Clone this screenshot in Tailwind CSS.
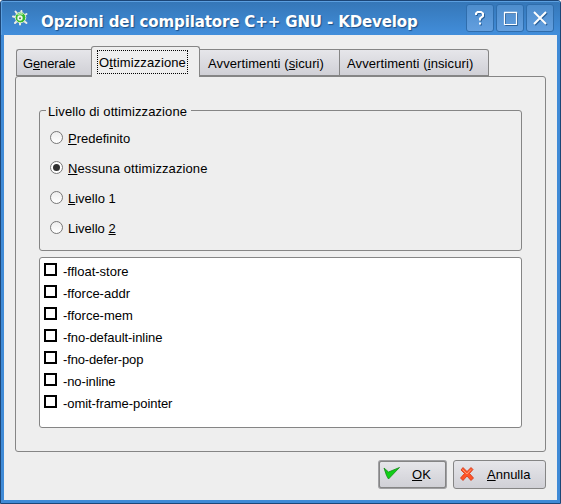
<!DOCTYPE html>
<html lang="it">
<head>
<meta charset="utf-8">
<title>Opzioni del compilatore C++ GNU - KDevelop</title>
<script src="https://cdn.jsdelivr.net/npm/@tailwindcss/browser@4"></script>
</head>
<body class="w-[561px] h-[504px] overflow-hidden bg-white">
<div class="w-[561px] h-[504px] flex flex-col rounded-t-[3px] border border-[#1c4677] bg-[#3f8ad6] font-['Liberation_Sans',Arial,sans-serif] text-[13px] leading-[16px] text-black">
  <header class="h-[34px] shrink-0 flex items-start rounded-t-[2px] border-t border-l border-[#5b9fe0] bg-linear-to-b from-[#3577b8] to-[#428edb] pl-[9px] pr-[6px]">
    <svg class="mt-[7px] w-[18px] h-[18px] shrink-0" viewBox="0 0 18 18">
      <g stroke="#f0eee4" stroke-width="2" stroke-linecap="round">
        <path d="M9 9 4.500 2.500M9 9 10.500 2M9 9 15.500 5M9 9 15.500 14M9 9 9 15.500M9 9 4 14M9 9 2 7.500"/>
      </g>
      <circle cx="9.500" cy="8.500" r="5.300" fill="#35bb2c" stroke="#dcecd6" stroke-width="1"/>
      <path d="M6.500 6Q9 3.500 12 5.500" stroke="#a7e59c" stroke-width="1.500" fill="none"/>
      <circle cx="9" cy="9" r="2.700" fill="#f0f7ec"/>
      <circle cx="9" cy="9.300" r="1" fill="#557f4e"/>
    </svg>
    <h1 class="ml-[12px] mt-[10px] grow whitespace-nowrap font-['DejaVu_Sans',sans-serif] font-bold text-[15px] leading-[20px] tracking-[-0.12px] text-white [text-shadow:1px_1px_1px_#1d4f86]">Opzioni del compilatore C++ GNU - KDevelop</h1>
    <div class="mt-[2px] flex gap-[2px]">
      <button class="size-[28px] rounded-[3px] border border-[#2f6dac] bg-linear-to-b from-[#4d8dcd] to-[#639fdf]"><svg width="26" height="26" viewBox="0 0 26 26" fill="none" stroke-width="2"><path d="M10 11V9L11 8H15L17 9.500V12L14 14.500V16.500M14 18.500v2" stroke="#2b629c"/><path d="M9 10V8.500L10.500 7H14L16 8.500V11L13 13.500V15.500M13 17.500v2" stroke="#fff"/></svg></button>
      <button class="size-[28px] rounded-[3px] border border-[#2f6dac] bg-linear-to-b from-[#4d8dcd] to-[#639fdf]"><svg width="26" height="26" viewBox="0 0 26 26" fill="none"><path d="M8 8.500H20.500V20.500H8.500V8" stroke="#2b629c"/><path d="M7.500 7.500H19.500V19.500H7.500V7" stroke="#fff" stroke-width="1.200"/><path d="M7 7.500H20" stroke="#fff" stroke-width="1.500"/></svg></button>
      <button class="size-[28px] rounded-[3px] border border-[#2f6dac] bg-linear-to-b from-[#4d8dcd] to-[#639fdf]"><svg width="26" height="26" viewBox="0 0 26 26" fill="none" stroke-width="2"><path d="M8 8 20 20M20 8 8 20" stroke="#2b629c"/><path d="M7 7 19 19M19 7 7 19" stroke="#fff"/></svg></button>
    </div>
  </header>
  <main class="grow mx-[3px] mb-[3px] flex flex-col bg-[#eeeeee] pt-[11px] pl-[11px] pr-[11px]">
    <nav class="relative z-10 -mb-px flex h-[31px] items-end whitespace-nowrap">
      <div class="mb-px ml-px h-[27px] w-[75px] rounded-tl-[3px] border border-r-0 border-[#858585] bg-linear-to-b from-[#e6e6ea] to-[#d0d0d6] pl-[6px] pt-[6px] tracking-[-0.15px]">G<u>e</u>nerale</div>
      <div class="h-[31px] w-[109px] rounded-t-[3px] border border-b-0 border-[#858585] bg-[#eeeeee] pl-[5px] pt-[3px]"><div class="h-[24px] w-[91px] border border-dotted border-black pl-px pt-[4px] tracking-[0.12px]">O<u>t</u>timizzazione</div></div>
      <div class="mb-px h-[27px] w-[140px] border border-l-0 border-[#858585] bg-linear-to-b from-[#e6e6ea] to-[#d0d0d6] pl-[8px] pt-[6px] tracking-[0.1px]">Avvertimenti (<u>s</u>icuri)</div>
      <div class="mb-px h-[27px] w-[149px] rounded-tr-[3px] border border-l-0 border-[#858585] bg-linear-to-b from-[#e6e6ea] to-[#d0d0d6] pl-[7px] pt-[6px] tracking-[0.1px]">Avvertimenti (<u>i</u>nsicuri)</div>
    </nav>
    <section class="h-[376px] w-[531px] shrink-0 rounded-[3px] border border-[#858585] px-[23px] pt-[33px]">
      <div class="h-[141px] rounded-[3px] border border-[#858585] pl-[10px]">
        <div class="-ml-[4px] -mt-[7px] w-[145px] whitespace-nowrap bg-[#eeeeee] pl-[2px] tracking-[0.1px]">Livello di ottimizzazione</div>
        <div class="mt-[4px] flex h-[30px] items-center gap-[5px]"><i class="mb-[3px] size-[13px] rounded-full border border-[#777] bg-linear-to-b from-[#eee] to-white"></i><span><u>P</u>redefinito</span></div>
        <div class="flex h-[30px] items-center gap-[5px]"><i class="mb-[3px] flex size-[13px] items-center justify-center rounded-full border border-[#777] bg-white"><b class="size-[7px] rounded-full bg-[#303030]"></b></i><span class="tracking-[0.1px]"><u>N</u>essuna ottimizzazione</span></div>
        <div class="flex h-[30px] items-center gap-[5px]"><i class="mb-[3px] size-[13px] rounded-full border border-[#777] bg-linear-to-b from-[#eee] to-white"></i><span><u>L</u>ivello 1</span></div>
        <div class="flex h-[30px] items-center gap-[5px]"><i class="mb-[3px] size-[13px] rounded-full border border-[#777] bg-linear-to-b from-[#eee] to-white"></i><span>Livello <u>2</u></span></div>
      </div>
      <div class="mt-[6px] h-[171px] rounded-[3px] border border-[#858585] bg-white pl-[4px] pt-[3px]">
        <div class="flex h-[22px] items-center gap-[6px]"><i class="mb-[5px] size-[13px] border-2 border-black"></i><span>-ffloat-store</span></div>
        <div class="flex h-[22px] items-center gap-[6px]"><i class="mb-[5px] size-[13px] border-2 border-black"></i><span>-fforce-addr</span></div>
        <div class="flex h-[22px] items-center gap-[6px]"><i class="mb-[5px] size-[13px] border-2 border-black"></i><span>-fforce-mem</span></div>
        <div class="flex h-[22px] items-center gap-[6px]"><i class="mb-[5px] size-[13px] border-2 border-black"></i><span class="tracking-[-0.06px]">-fno-default-inline</span></div>
        <div class="flex h-[22px] items-center gap-[6px]"><i class="mb-[5px] size-[13px] border-2 border-black"></i><span class="tracking-[-0.15px]">-fno-defer-pop</span></div>
        <div class="flex h-[22px] items-center gap-[6px]"><i class="mb-[5px] size-[13px] border-2 border-black"></i><span class="tracking-[-0.1px]">-no-inline</span></div>
        <div class="flex h-[22px] items-center gap-[6px]"><i class="mb-[5px] size-[13px] border-2 border-black"></i><span class="tracking-[-0.06px]">-omit-frame-pointer</span></div>
      </div>
    </section>
    <footer class="mt-[8px] flex justify-end gap-[6px]">
      <button class="flex h-[29px] w-[69px] items-start rounded-[3px] border-2 border-[#a0a0a3] bg-linear-to-b from-[#e6e6ea] to-[#d0d0d6] pl-[3px] outline -outline-offset-2 outline-[#858585]"><svg class="mt-[3px]" width="18" height="16" viewBox="0 0 18 16"><path d="M1 3 5.500 7 16.500 2.500 5.500 14 3.500 10.500Z" fill="#10cf16" stroke="#138b17" stroke-width=".8" stroke-linejoin="round"/></svg><span class="ml-[11px] mt-[5px]"><u>O</u>K</span></button>
      <button class="flex h-[29px] w-[93px] items-start rounded-[3px] border border-[#858585] bg-linear-to-b from-[#e6e6ea] to-[#d0d0d6] pl-[5px]"><svg class="mt-[5px]" width="16" height="16" viewBox="0 0 16 16"><path d="M2 4 4 1.500 8 5.500 12 1.500 14 3.500 10.500 7.500 14.500 12 12 14.500 8 10 4 14.500 1.500 12 5.500 7.500Z" fill="#ff5426" stroke="#cf3517" stroke-width=".8" stroke-linejoin="round"/><path d="M3.500 3.500 8 8 12 3.500" stroke="#ff9b73" fill="none"/></svg><span class="ml-[12px] mt-[6px]"><u>A</u>nnulla</span></button>
    </footer>
  </main>
</div>
</body>
</html>
